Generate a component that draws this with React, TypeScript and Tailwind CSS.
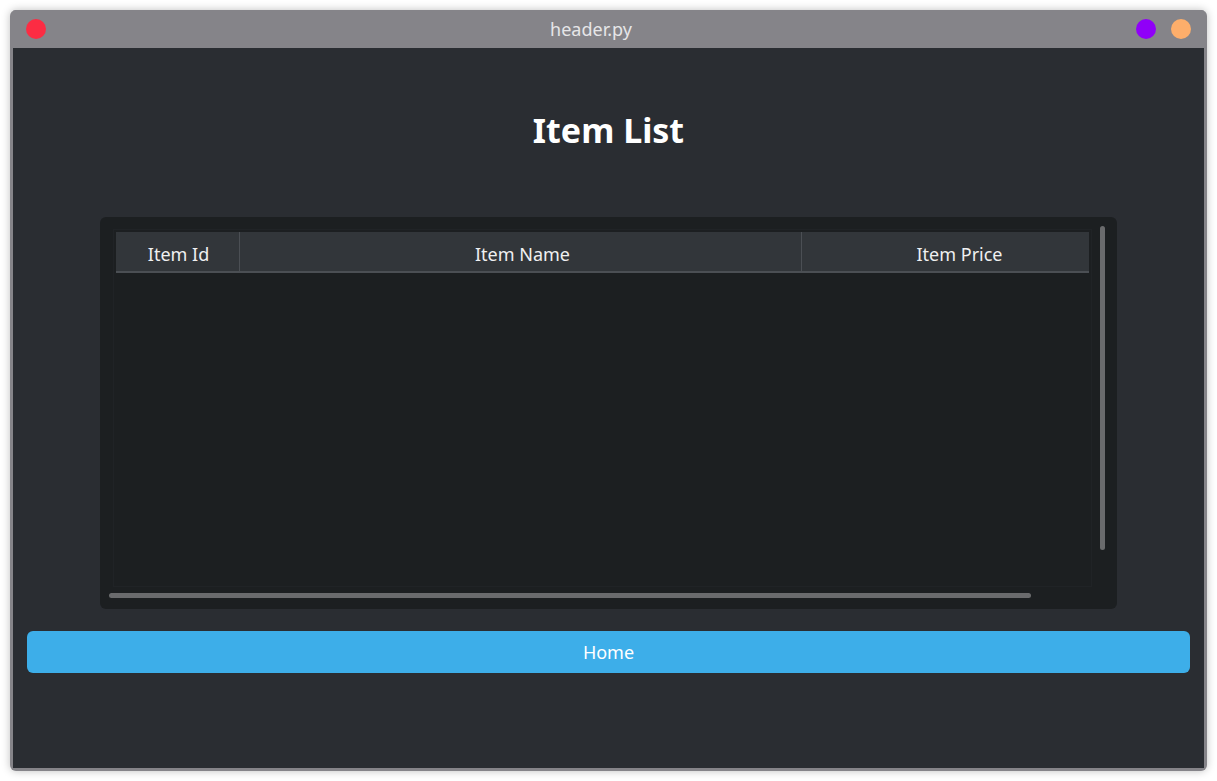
import React from "react";

const font = { fontFamily: '"Noto Sans", "Open Sans", sans-serif' };

function TitleBar() {
  return (
    <div className="flex items-center h-[38px] bg-[#858489] px-[13px] shrink-0">
      <div className="w-5 h-5 rounded-full bg-[#fc2c43]" />
      <div className="flex-1 text-center text-[18px] text-[#e6e6e8]">header.py</div>
      <div className="flex gap-[15px]">
        <div className="w-5 h-5 rounded-full bg-[#9000f8]" />
        <div className="w-5 h-5 rounded-full bg-[#fdae6b]" />
      </div>
    </div>
  );
}

function ItemTable() {
  return (
    <div className="relative mx-[87px] h-[392px] rounded-md bg-[#1c1f21]">
      <div className="absolute left-[13px] top-[12px] right-[25px] bottom-[22px] border border-[#202326]">
        <div className="ml-[2px] mt-[2px] mr-[2px] flex h-[41px] bg-[#32363a] border-b-2 border-[#4b4f54] text-[18px] text-[#eff0f1]">
          <div className="w-[124px] pl-[2px] pt-[5px] flex items-center justify-center border-r border-[#4b4f54]">Item Id</div>
          <div className="w-[562px] pl-[4px] pt-[5px] flex items-center justify-center border-r border-[#4b4f54]">Item Name</div>
          <div className="flex-1 pl-[28px] pt-[5px] flex items-center justify-center">Item Price</div>
        </div>
      </div>
      <div className="absolute right-[12px] top-[9px] w-[5px] h-[324px] rounded-full bg-[#6a6b6d]" />
      <div className="absolute left-[9px] bottom-[11px] w-[922px] h-[5px] rounded-full bg-[#6a6b6d]" />
    </div>
  );
}

export default function App() {
  return (
    <div className="w-[1217px] h-[781px] bg-white p-[10px]" style={font}>
      <div className="flex flex-col w-[1197px] h-[761px] rounded-[6px] overflow-hidden bg-[#858489] pb-[3px] px-[3px] shadow-[0_0_8px_rgba(0,0,0,0.25)]">
        <TitleBar />
        <div className="flex-1 flex flex-col bg-[#2a2d32] pt-[60px]">
          <h1 className="text-center text-[34px] font-bold text-white h-[44px] leading-[44px]">Item List</h1>
          <div className="h-[65px]" />
          <ItemTable />
          <div className="px-[14px] pt-[22px]">
            <button className="w-full h-[42px] rounded-md bg-[#3daee9] text-[18px] text-white">Home</button>
          </div>
        </div>
      </div>
    </div>
  );
}
